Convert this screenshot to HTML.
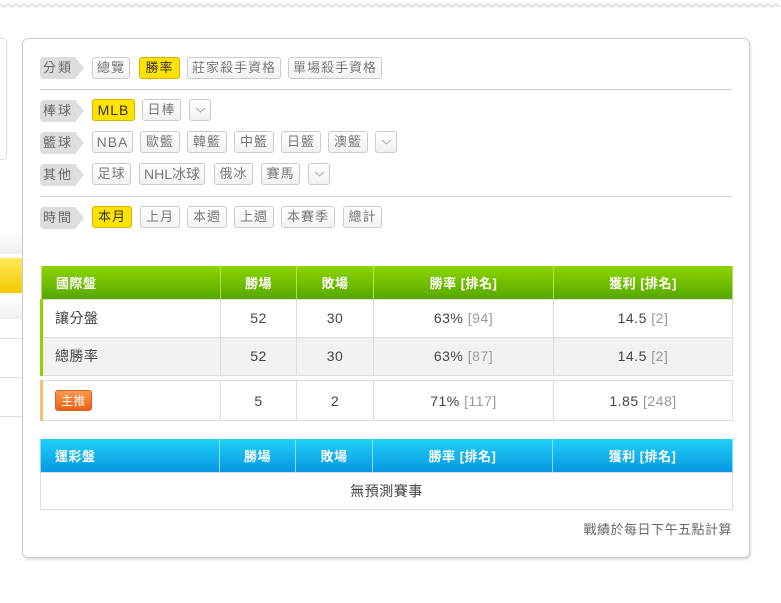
<!DOCTYPE html>
<html><head><meta charset="utf-8"><style>
*{margin:0;padding:0;box-sizing:border-box}
body{width:781px;height:603px;background:#fff;position:relative;overflow:hidden;font-family:"Liberation Sans","Noto Sans CJK TC",sans-serif;font-size:13px;color:#333}
.a{position:absolute}
.panel{left:22px;top:38px;width:728px;height:520px;border:1px solid #ccc;border-radius:6px;box-shadow:1px 2px 2px #ddd;background:#fff}
.lab{position:absolute;left:40px;height:22px;width:44px;background:#ddd;color:#666;font-size:13px;line-height:22px;padding-left:3px;letter-spacing:2px;border-radius:4px 0 0 4px;clip-path:polygon(0 0,80% 0,100% 50%,80% 100%,0 100%)}
.t{position:absolute;height:22px;border:1px solid #ccc;border-radius:3px;background:linear-gradient(#fff,#f1f1f1);color:#777;font-size:13px;line-height:20px;text-align:center;letter-spacing:1px}
.y{background:#ffe200;border-color:#d9b200;color:#333}
.dd{width:22px}
.dd svg{position:absolute;left:5px;top:7px}
.sep{position:absolute;left:40px;width:692px;height:1px;background:#ccc}
table{position:absolute;left:40px;width:693px;border-collapse:collapse;font-size:14px;letter-spacing:.5px}
td,th{border:1px solid #ddd;text-align:center;color:#444}
th{color:#fff;font-weight:bold;font-size:13px;border-color:#b0e060;border-top:none;border-bottom:none}
.g{color:#999}
</style></head><body>
<svg class="a" style="left:0;top:0" width="781" height="8"><polyline fill="none" stroke="#ccc" points="0,4 4,7 8,4 12,7 16,4 20,7 24,4 28,7 32,4 36,7 40,4 44,7 48,4 52,7 56,4 60,7 64,4 68,7 72,4 76,7 80,4 84,7 88,4 92,7 96,4 100,7 104,4 108,7 112,4 116,7 120,4 124,7 128,4 132,7 136,4 140,7 144,4 148,7 152,4 156,7 160,4 164,7 168,4 172,7 176,4 180,7 184,4 188,7 192,4 196,7 200,4 204,7 208,4 212,7 216,4 220,7 224,4 228,7 232,4 236,7 240,4 244,7 248,4 252,7 256,4 260,7 264,4 268,7 272,4 276,7 280,4 284,7 288,4 292,7 296,4 300,7 304,4 308,7 312,4 316,7 320,4 324,7 328,4 332,7 336,4 340,7 344,4 348,7 352,4 356,7 360,4 364,7 368,4 372,7 376,4 380,7 384,4 388,7 392,4 396,7 400,4 404,7 408,4 412,7 416,4 420,7 424,4 428,7 432,4 436,7 440,4 444,7 448,4 452,7 456,4 460,7 464,4 468,7 472,4 476,7 480,4 484,7 488,4 492,7 496,4 500,7 504,4 508,7 512,4 516,7 520,4 524,7 528,4 532,7 536,4 540,7 544,4 548,7 552,4 556,7 560,4 564,7 568,4 572,7 576,4 580,7 584,4 588,7 592,4 596,7 600,4 604,7 608,4 612,7 616,4 620,7 624,4 628,7 632,4 636,7 640,4 644,7 648,4 652,7 656,4 660,7 664,4 668,7 672,4 676,7 680,4 684,7 688,4 692,7 696,4 700,7 704,4 708,7 712,4 716,7 720,4 724,7 728,4 732,7 736,4 740,7 744,4 748,7 752,4 756,7 760,4 764,7 768,4 772,7 776,4 780,7"/></svg>
<div class="a" style="left:-5px;top:38px;width:12px;height:122px;border:1px solid #ddd;border-radius:4px"></div>
<div class="a" style="left:0;top:232px;width:22px;height:22px;background:linear-gradient(#fff,#eee)"></div>
<div class="a" style="left:0;top:258px;width:31px;height:35px;background:linear-gradient(#ffe95a,#f0c800);clip-path:polygon(0 0,85% 0,100% 50%,85% 100%,0 100%)"></div>
<div class="a" style="left:0;top:297px;width:22px;height:22px;background:linear-gradient(#fff,#eee)"></div>
<div class="a" style="left:0;top:338px;width:22px;height:1px;background:#ddd"></div>
<div class="a" style="left:0;top:377px;width:22px;height:1px;background:#ddd"></div>
<div class="a" style="left:0;top:416px;width:22px;height:1px;background:#ddd"></div>
<div class="a panel"></div>
<div class="lab" style="top:57px">分類</div>
<div class="t" style="left:92px;top:57px;width:38px">總覽</div>
<div class="t y" style="left:139px;top:57px;width:41px">勝率</div>
<div class="t" style="left:187px;top:57px;width:94px">莊家殺手資格</div>
<div class="t" style="left:288px;top:57px;width:94px">單場殺手資格</div>
<div class="sep" style="top:89px"></div>
<div class="lab" style="top:100px">棒球</div>
<div class="t y" style="left:92px;top:99px;width:43px;font-size:14px">MLB</div>
<div class="t" style="left:142px;top:99px;width:39px">日棒</div>
<div class="t dd" style="left:189px;top:99px"><svg width="11" height="7"><polyline points="1,1 5.5,5 10,1" fill="none" stroke="#aaa"/></svg></div>
<div class="lab" style="top:132px">籃球</div>
<div class="t" style="left:92px;top:131px;width:41px;font-size:14px">NBA</div>
<div class="t" style="left:140px;top:131px;width:40px">歐籃</div>
<div class="t" style="left:187px;top:131px;width:40px">韓籃</div>
<div class="t" style="left:234px;top:131px;width:40px">中籃</div>
<div class="t" style="left:281px;top:131px;width:40px">日籃</div>
<div class="t" style="left:328px;top:131px;width:40px">澳籃</div>
<div class="t dd" style="left:375px;top:131px"><svg width="11" height="7"><polyline points="1,1 5.5,5 10,1" fill="none" stroke="#aaa"/></svg></div>
<div class="lab" style="top:164px">其他</div>
<div class="t" style="left:92px;top:163px;width:39px">足球</div>
<div class="t" style="left:139px;top:163px;width:66px;font-size:14px;letter-spacing:0">NHL冰球</div>
<div class="t" style="left:214px;top:163px;width:39px">俄冰</div>
<div class="t" style="left:261px;top:163px;width:39px">賽馬</div>
<div class="t dd" style="left:308px;top:163px"><svg width="11" height="7"><polyline points="1,1 5.5,5 10,1" fill="none" stroke="#aaa"/></svg></div>
<div class="sep" style="top:196px"></div>
<div class="lab" style="top:207px">時間</div>
<div class="t y" style="left:92px;top:206px;width:40px">本月</div>
<div class="t" style="left:140px;top:206px;width:40px">上月</div>
<div class="t" style="left:187px;top:206px;width:40px">本週</div>
<div class="t" style="left:234px;top:206px;width:40px">上週</div>
<div class="t" style="left:281px;top:206px;width:54px">本賽季</div>
<div class="t" style="left:343px;top:206px;width:39px">總計</div>

<table style="top:266px">
<tr style="height:33px;background:linear-gradient(#8fd400,#55a800)"><th style="text-align:left;padding-left:14px;width:179px;color:#fff">國際盤</th><th style="width:76px;color:#fff">勝場</th><th style="width:77px;color:#fff">敗場</th><th style="width:180px;color:#fff">勝率 [排名]</th><th style="color:#fff">獲利 [排名]</th></tr>
<tr style="height:38px"><td style="text-align:left;padding-left:12px;border-left:3px solid #8fd400">讓分盤</td><td>52</td><td>30</td><td>63% <span class="g">[94]</span></td><td>14.5 <span class="g">[2]</span></td></tr>
<tr style="height:38px;background:#f2f2f2"><td style="text-align:left;padding-left:12px;border-left:3px solid #8fd400">總勝率</td><td>52</td><td>30</td><td>63% <span class="g">[87]</span></td><td>14.5 <span class="g">[2]</span></td></tr>
</table>
<table style="top:380px">
<tr style="height:40px"><td style="text-align:left;padding-left:12px;border-left:3px solid #f8c070;width:179px"><span style="display:inline-block;background:linear-gradient(#ff9a50,#e8601a);color:#fff;font-size:12px;padding:1px 5px;border-radius:3px;border:1px solid #d86020">主推</span></td><td style="width:76px">5</td><td style="width:77px">2</td><td style="width:180px">71% <span class="g">[117]</span></td><td>1.85 <span class="g">[248]</span></td></tr>
</table>
<table style="top:439px">
<tr style="height:33px;background:linear-gradient(#20d0f8,#0898e0)"><th style="text-align:left;padding-left:14px;width:179px;border-color:#80e0ff;color:#fff">運彩盤</th><th style="width:76px;border-color:#80e0ff;color:#fff">勝場</th><th style="width:77px;border-color:#80e0ff;color:#fff">敗場</th><th style="width:180px;border-color:#80e0ff;color:#fff">勝率 [排名]</th><th style="border-color:#80e0ff;color:#fff">獲利 [排名]</th></tr>
<tr style="height:37px"><td colspan="5">無預測賽事</td></tr>
</table>
<div class="a" style="right:49px;top:519px;color:#666;font-size:13px;letter-spacing:.5px">戰績於每日下午五點計算</div>
</body></html>
